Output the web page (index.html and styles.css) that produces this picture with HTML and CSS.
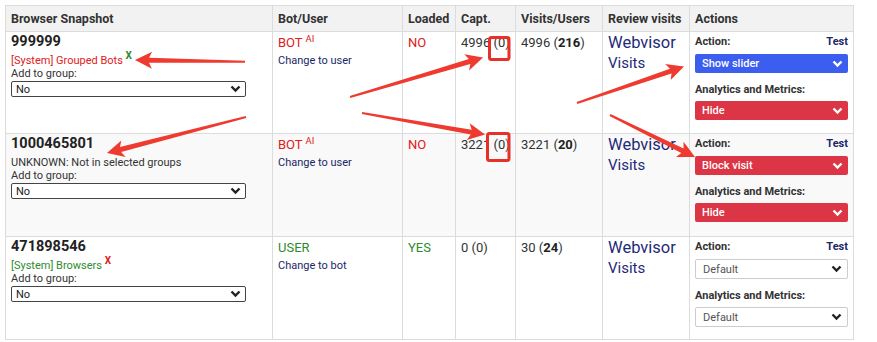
FILE: index.html
```html
<!DOCTYPE html>
<html>
<head>
<meta charset="utf-8">
<title>Browser Snapshots</title>
<link rel="stylesheet" href="styles.css">
</head>
<body>
<div class="page">
  <table class="snap">
    <colgroup>
      <col class="w-snap"><col class="w-bot"><col class="w-loaded"><col class="w-capt"><col class="w-visits"><col class="w-review"><col class="w-actions">
    </colgroup>
    <thead>
      <tr>
        <th>Browser Snapshot</th>
        <th>Bot/User</th>
        <th>Loaded</th>
        <th>Capt.</th>
        <th>Visits/Users</th>
        <th>Review visits</th>
        <th>Actions</th>
      </tr>
    </thead>
    <tbody>
      <tr class="row">
        <td>
          <div class="sid">999999</div>
          <div class="grp red">[System] Grouped Bots <sup class="x green">X</sup></div>
          <div class="add">Add to group:</div>
          <div class="gsel"><span>No</span><svg class="chev" width="11" height="8" viewBox="0 0 11 8"><path d="M1.5 1.5 L5.5 5.5 L9.5 1.5" fill="none" stroke="#222" stroke-width="2.4"/></svg></div>
        </td>
        <td>
          <div class="big red">BOT <sup class="ai">AI</sup></div>
          <div class="chg">Change to user</div>
        </td>
        <td><div class="big red">NO</div></td>
        <td><div class="big">4996 (0)</div></td>
        <td><div class="big">4996 (<b>216</b>)</div></td>
        <td>
          <div class="wv">Webvisor</div>
          <div class="vs">Visits</div>
        </td>
        <td>
          <div class="lblrow"><span class="lbl">Action:</span><span class="lbl test">Test</span></div>
          <div class="asel blue"><span>Show slider</span><svg class="chev" width="11" height="8" viewBox="0 0 11 8"><path d="M1.5 1.5 L5.5 5.5 L9.5 1.5" fill="none" stroke="#fff" stroke-width="2.4"/></svg></div>
          <div class="lbl lbl2">Analytics and Metrics:</div>
          <div class="asel redbg asel2"><span>Hide</span><svg class="chev" width="11" height="8" viewBox="0 0 11 8"><path d="M1.5 1.5 L5.5 5.5 L9.5 1.5" fill="none" stroke="#fff" stroke-width="2.4"/></svg></div>
        </td>
      </tr>
      <tr class="row alt">
        <td>
          <div class="sid">1000465801</div>
          <div class="grp">UNKNOWN: Not in selected groups</div>
          <div class="add">Add to group:</div>
          <div class="gsel"><span>No</span><svg class="chev" width="11" height="8" viewBox="0 0 11 8"><path d="M1.5 1.5 L5.5 5.5 L9.5 1.5" fill="none" stroke="#222" stroke-width="2.4"/></svg></div>
        </td>
        <td>
          <div class="big red">BOT <sup class="ai">AI</sup></div>
          <div class="chg">Change to user</div>
        </td>
        <td><div class="big red">NO</div></td>
        <td><div class="big">3221 (0)</div></td>
        <td><div class="big">3221 (<b>20</b>)</div></td>
        <td>
          <div class="wv">Webvisor</div>
          <div class="vs">Visits</div>
        </td>
        <td>
          <div class="lblrow"><span class="lbl">Action:</span><span class="lbl test">Test</span></div>
          <div class="asel redbg"><span>Block visit</span><svg class="chev" width="11" height="8" viewBox="0 0 11 8"><path d="M1.5 1.5 L5.5 5.5 L9.5 1.5" fill="none" stroke="#fff" stroke-width="2.4"/></svg></div>
          <div class="lbl lbl2">Analytics and Metrics:</div>
          <div class="asel redbg asel2"><span>Hide</span><svg class="chev" width="11" height="8" viewBox="0 0 11 8"><path d="M1.5 1.5 L5.5 5.5 L9.5 1.5" fill="none" stroke="#fff" stroke-width="2.4"/></svg></div>
        </td>
      </tr>
      <tr class="row">
        <td>
          <div class="sid">471898546</div>
          <div class="grp green">[System] Browsers <sup class="x red">X</sup></div>
          <div class="add">Add to group:</div>
          <div class="gsel"><span>No</span><svg class="chev" width="11" height="8" viewBox="0 0 11 8"><path d="M1.5 1.5 L5.5 5.5 L9.5 1.5" fill="none" stroke="#222" stroke-width="2.4"/></svg></div>
        </td>
        <td>
          <div class="big green">USER</div>
          <div class="chg">Change to bot</div>
        </td>
        <td><div class="big green">YES</div></td>
        <td><div class="big">0 (0)</div></td>
        <td><div class="big">30 (<b>24</b>)</div></td>
        <td>
          <div class="wv">Webvisor</div>
          <div class="vs">Visits</div>
        </td>
        <td>
          <div class="lblrow"><span class="lbl">Action:</span><span class="lbl test">Test</span></div>
          <div class="asel plain"><span>Default</span><svg class="chev" width="11" height="8" viewBox="0 0 11 8"><path d="M1.5 1.5 L5.5 5.5 L9.5 1.5" fill="none" stroke="#222" stroke-width="2.4"/></svg></div>
          <div class="lbl lbl2">Analytics and Metrics:</div>
          <div class="asel plain asel2"><span>Default</span><svg class="chev" width="11" height="8" viewBox="0 0 11 8"><path d="M1.5 1.5 L5.5 5.5 L9.5 1.5" fill="none" stroke="#222" stroke-width="2.4"/></svg></div>
        </td>
      </tr>
    </tbody>
  </table>

  <svg class="marks" width="877" height="342" viewBox="0 0 877 342">
    <g fill="#ee3a2f">
      <polygon transform="translate(135,60) rotate(180.89)" points="0,0 -17,-8.5 -14,-2.5 -110,-1 -110,1 -14,2.5 -17,8.5"/>
      <polygon transform="translate(107,153) rotate(165.48)" points="0,0 -17,-8.5 -14,-2.5 -143.6,-1 -143.6,1 -14,2.5 -17,8.5"/>
      <polygon transform="translate(483,57.5) rotate(-16.54)" points="0,0 -17,-8.5 -14,-2.5 -138.7,-1 -138.7,1 -14,2.5 -17,8.5"/>
      <polygon transform="translate(485,134.5) rotate(9.91)" points="0,0 -17,-8.5 -14,-2.5 -124.9,-1 -124.9,1 -14,2.5 -17,8.5"/>
      <polygon transform="translate(684,66.5) rotate(-18.84)" points="0,0 -17,-8.5 -14,-2.5 -113.1,-1 -113.1,1 -14,2.5 -17,8.5"/>
      <polygon transform="translate(695,157) rotate(26.3)" points="0,0 -17,-8.5 -14,-2.5 -94.8,-1 -94.8,1 -14,2.5 -17,8.5"/>
    </g>
    <g fill="none" stroke="#e8302a" stroke-width="3">
      <rect x="489.5" y="37.5" width="19.5" height="22" rx="2"/>
      <rect x="487.5" y="133.5" width="21.5" height="27" rx="2"/>
    </g>
  </svg>
</div>
</body>
</html>
```

FILE: styles.css
```css
html, body {
  margin: 0;
  padding: 0;
  background: #fff;
}

body {
  font-family: Roboto, "Liberation Sans", Arial, sans-serif;
  color: #333;
}

.page {
  position: relative;
  width: 877px;
  height: 342px;
  padding: 5px 0 0 5px;
  box-sizing: border-box;
  overflow: hidden;
}

.snap {
  border-collapse: collapse;
  table-layout: fixed;
  width: 848px;
}

.w-snap { width: 267px; }
.w-bot { width: 130px; }
.w-loaded { width: 53px; }
.w-capt { width: 60px; }
.w-visits { width: 87px; }
.w-review { width: 87px; }
.w-actions { width: 164px; }

.snap th,
.snap td {
  border: 1px solid #dcdcdc;
}

.snap th {
  height: 25px;
  padding: 0 5px;
  background: #f2f2f2;
  text-align: left;
  font-size: 12.5px;
  font-weight: 700;
  color: #333;
  white-space: nowrap;
}

.snap td {
  padding: 2px 5px 0 5px;
  vertical-align: top;
}

.row { height: 103px; }
.row:first-child { height: 102px; }
.alt td { background: #f9f9f9; }

.sid {
  font-size: 14.5px;
  line-height: 16px;
  font-weight: 700;
  color: #222;
}

.grp {
  margin-top: 4px;
  font-size: 11px;
  line-height: 13px;
  color: #333;
}

.add {
  font-size: 11px;
  line-height: 13px;
  color: #333;
}

.gsel {
  margin-top: 1px;
  width: 235px;
  height: 16px;
  box-sizing: border-box;
  border: 1px solid #444;
  border-radius: 2px;
  background: #fff;
  display: flex;
  align-items: center;
  justify-content: space-between;
  padding: 0 4px 0 4px;
  font-size: 11px;
  color: #222;
}

.red { color: #e02020; }
.green { color: #2e8b2e; }

sup.x {
  font-size: 10px;
  font-weight: 700;
  line-height: 0;
  vertical-align: 5px;
}

sup.ai {
  font-size: 9.5px;
  line-height: 0;
  vertical-align: 5px;
}

.big {
  padding-top: 1px;
  font-size: 13px;
  line-height: 16px;
  color: #333;
}

.big b { font-weight: 700; color: #222; }
.big.red { color: #e02020; }
.big.green { color: #2e8b2e; }

.chg {
  margin-top: 3px;
  font-size: 11px;
  line-height: 13px;
  color: #1c2766;
}

.wv {
  font-size: 16.5px;
  line-height: 18px;
  color: #1f2a78;
}

.vs {
  font-size: 15px;
  line-height: 23px;
  color: #1f2a78;
}

.lblrow {
  display: flex;
  justify-content: space-between;
  align-items: center;
}

.lbl {
  font-size: 11px;
  line-height: 16px;
  font-weight: 700;
  color: #333;
}

.test { color: #1c2766; }

.lbl2 { margin-top: 9px; }

.asel {
  margin-top: 4px;
  height: 19px;
  box-sizing: border-box;
  border-radius: 2px;
  display: flex;
  align-items: center;
  justify-content: space-between;
  padding: 0 5px 0 7px;
  font-size: 11px;
  font-weight: 500;
  color: #fff;
}

.asel2 { margin-top: 3px; }

.asel.blue { background: #3c5ef0; }
.asel.redbg { background: #dc3545; }

.asel.plain {
  height: 20px;
  background: #fff;
  border: 1px solid #ccc;
  color: #555;
  font-weight: 400;
}

.chev { display: block; }

.marks {
  position: absolute;
  left: 0;
  top: 0;
  pointer-events: none;
}
```
